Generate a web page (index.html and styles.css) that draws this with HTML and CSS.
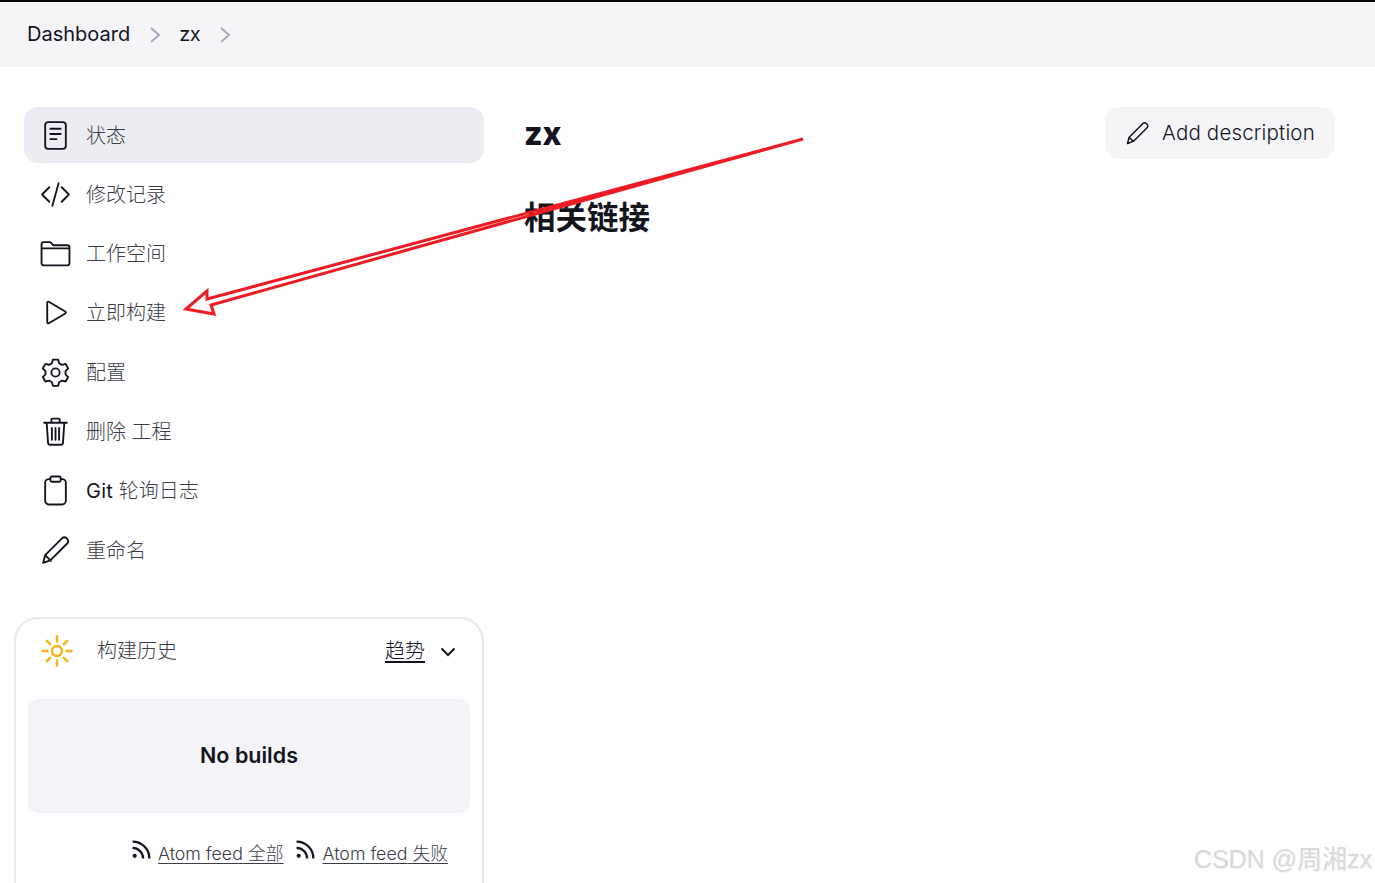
FILE: index.html
```html
<!DOCTYPE html>
<html lang="zh-CN">
<head>
<meta charset="utf-8">
<title>zx</title>
<link rel="stylesheet" href="styles.css">
</head>
<body>
<nav class="crumbs">
  <a class="crumb">Dashboard</a>
  <svg class="chev" viewBox="0 0 12 18"><path d="M2 2l8 7-8 7"/></svg>
  <a class="crumb">zx</a>
  <svg class="chev" viewBox="0 0 12 18"><path d="M2 2l8 7-8 7"/></svg>
</nav>
<div class="page">
  <aside class="side">
    <ul class="menu">
      <li class="item active">
        <svg class="ic" viewBox="0 0 30 30"><rect x="5" y="2" width="20" height="26" rx="3"/><path d="M10 8.500h10M10 13.500h10M10 18.500h6"/></svg>
        <span>状态</span>
      </li>
      <li class="item">
        <svg class="ic" viewBox="0 0 30 30"><path d="M9 8l-7 7 7 7M21 8l7 7-7 7M18 4l-6 22"/></svg>
        <span>修改记录</span>
      </li>
      <li class="item">
        <svg class="ic" viewBox="0 0 30 30"><path d="M1.500 9V6a2 2 0 0 1 2-2h6.500l3 3h13.500a2 2 0 0 1 2 2v15.500a2 2 0 0 1-2 2h-23a2 2 0 0 1-2-2zM1.500 10h27"/></svg>
        <span>工作空间</span>
      </li>
      <li class="item">
        <svg class="ic" viewBox="0 0 30 30"><path d="M7 5.500a1 1 0 0 1 1.500-.9l16 9.500a1 1 0 0 1 0 1.800l-16 9.500a1 1 0 0 1-1.500-.9z"/></svg>
        <span>立即构建</span>
      </li>
      <li class="item">
        <svg class="ic" viewBox="0 0 30 30"><circle cx="15" cy="15" r="4"/><path d="M12.500 2.500h5l1 3.500 2.800 1.600 3.500-.9 2.500 4.300-2.600 2.600v3.200l2.600 2.600-2.500 4.300-3.500-.9-2.800 1.600-1 3.500h-5l-1-3.500-2.800-1.600-3.500.9-2.500-4.300 2.600-2.600v-3.200l-2.600-2.600 2.500-4.300 3.500.9 2.800-1.600z" stroke-linejoin="round"/></svg>
        <span>配置</span>
      </li>
      <li class="item">
        <svg class="ic" viewBox="0 0 30 30"><path d="M4 6.500h22M6.500 7l1.300 19a2 2 0 0 0 2 1.800h10.400a2 2 0 0 0 2-1.800l1.300-19M11 6V3.500a1 1 0 0 1 1-1h6a1 1 0 0 1 1 1V6M11.500 11.500v11.500M15 11.500v11.500M18.500 11.500v11.500"/></svg>
        <span>删除 工程</span>
      </li>
      <li class="item">
        <svg class="ic" viewBox="0 0 30 30"><rect x="5" y="4" width="20" height="24.500" rx="3.500"/><rect x="10" y="1.500" width="10" height="5" rx="1.500" class="fillw"/></svg>
        <span><b class="lat">Git</b> 轮询日志</span>
      </li>
      <li class="item">
        <svg class="ic" viewBox="0 0 30 30"><path d="M3 27l2-7.500L21.500 3a2.800 2.800 0 0 1 4 0l1 1a2.800 2.800 0 0 1 0 4L10 24.500zM5 19.500l5.500 5.500"/></svg>
        <span>重命名</span>
      </li>
    </ul>
    <section class="history">
      <header class="hist-head">
        <svg class="sun" viewBox="0 0 32 32"><circle cx="16" cy="16" r="5"/><path d="M16 1.500v5M16 25.500v5M1.500 16h5M25.500 16h5M5.800 5.800l3.400 3.400M22.800 22.800l3.400 3.400M5.800 26.200l3.400-3.400M22.800 9.200l3.400-3.400"/></svg>
        <span class="hist-title">构建历史</span>
        <a class="trend">趋势</a>
        <svg class="down" viewBox="0 0 16 10"><path d="M1.500 1.500L8 8l6.500-6.500"/></svg>
      </header>
      <div class="empty">No builds</div>
      <footer class="feeds">
        <svg class="rss" viewBox="0 0 20 20"><circle cx="3.500" cy="16" r="2" class="dot"/><path d="M1.500 8.500a10 10 0 0 1 10 10M1.500 2.500a16 16 0 0 1 16 16"/></svg>
        <a class="feed"><b class="lat">Atom feed</b> 全部</a>
        <svg class="rss" viewBox="0 0 20 20"><circle cx="3.500" cy="16" r="2" class="dot"/><path d="M1.500 8.500a10 10 0 0 1 10 10M1.500 2.500a16 16 0 0 1 16 16"/></svg>
        <a class="feed"><b class="lat">Atom feed</b> 失败</a>
      </footer>
    </section>
  </aside>
  <main class="main">
    <div class="title-row">
      <h1 class="title">zx</h1>
      <button class="add">
        <svg class="add-ic" viewBox="0 0 30 30"><path d="M3 27l2-7.500L21.500 3a2.800 2.800 0 0 1 4 0l1 1a2.800 2.800 0 0 1 0 4L10 24.500zM5 19.500l5.500 5.500"/></svg>
        <span class="add-text">Add description</span>
      </button>
    </div>
    <h2 class="links">相关链接</h2>
  </main>
</div>
<svg class="arrow" viewBox="0 0 1375 883"><path d="M186 309L207 291L207 299L803 139L211 305L214 314Z"/></svg>
<div class="mark">CSDN @周湘zx</div>
</body>
</html>
```
FILE: styles.css
```css
* { box-sizing: border-box; }
html, body { margin: 0; height: 883px; overflow: hidden; }
body {
  position: relative;
  background: #fff;
  color: #14141f;
  font-family: Inter, "Noto Sans CJK SC", sans-serif;
  font-size: 20px;
  border-top: 2px solid #000;
}
.crumbs {
  height: 65px;
  background: #f5f5f8;
  display: flex;
  align-items: center;
  padding-left: 27px;
}
.crumb { line-height: 1; margin-top: -2px; }
.chev { width: 12px; height: 18px; fill: none; stroke: #aaaab8; stroke-width: 2; }
.crumb + .chev { margin-left: 19px; margin-right: 18px; }
.crumb:nth-of-type(2) { letter-spacing: -.5px; }
.page { display: flex; }
.side { width: 484px; padding-top: 40px; flex: none; }
.menu { list-style: none; margin: 0 0 0 24px; padding: 0; }
.item {
  height: 56px;
  margin-bottom: 3.300px;
  display: flex;
  align-items: center;
  gap: 15px;
  padding-left: 16px;
  border-radius: 14px;
  color: #3c3c46;
  font-weight: 300;
}
.item span { margin-top: -2px; }
.lat { font-weight: 400; color: #14141f; letter-spacing: .3px; }
.active { background: #ecedf2; }
.ic { width: 31px; height: 31px; flex: none; fill: none; stroke: #14141f; stroke-width: 1.800; stroke-linecap: round; stroke-linejoin: round; }
.fillw { fill: #fff; }
.history {
  margin: 39px 0 0 14px;
  height: 300px;
  border: 2px solid #e9e9ef;
  border-radius: 24px;
  padding: 0 12px;
}
.hist-head { height: 80px; display: flex; align-items: center; padding: 0 14px 20px 13px; }
.sun { width: 32px; height: 32px; fill: none; stroke: #fbb117; stroke-width: 2.500; stroke-linecap: round; margin-top: 4px; flex: none; }
.hist-title { margin-left: 24px; font-weight: 300; color: #3c3c46; }
.trend { margin-left: auto; text-decoration: underline; text-underline-offset: 3px; font-weight: 300; }
.down { width: 16px; height: 10px; margin-left: 15px; margin-top: 6px; fill: none; stroke: #14141f; stroke-width: 2; }
.empty {
  height: 114px;
  background: #f3f3f8;
  border-radius: 10px;
  display: flex;
  align-items: center;
  justify-content: center;
  font-weight: 600;
  font-size: 21.500px;
  padding-bottom: 2px;
}
.feeds {
  margin-top: 26px;
  display: flex;
  align-items: center;
  justify-content: flex-end;
  padding-right: 22px;
  font-size: 17.800px;
  font-weight: 300;
  color: #3c3c46;
}
.feeds .lat { font-weight: 300; color: #3c3c46; letter-spacing: 0; }
.feed { text-decoration: underline; text-underline-offset: 3px; margin-left: 6px; }
.feed + .rss { margin-left: 12px; }
.rss { width: 21px; height: 21px; margin-top: -5px; fill: none; stroke: #14141f; stroke-width: 2.200; }
.rss .dot { fill: #14141f; stroke: none; }
.main { flex: 1; padding: 40px 40px 0 40px; }
.title-row { display: flex; justify-content: space-between; align-items: flex-start; }
.title { margin: 0; padding-top: 8px; font-size: 32px; line-height: 38px; font-weight: 800; }
.add {
  display: flex;
  align-items: center;
  gap: 12px;
  height: 52px;
  width: 230px;
  padding: 0 0 0 20px;
  background: #f5f5f8;
  border: 0;
  border-radius: 14px;
  font: inherit;
  font-size: 20.500px;
  color: #14141f;
}
.add-text { margin-top: -2px; font-weight: 300; letter-spacing: .18px; }
.add-ic { width: 25px; height: 25px; fill: none; stroke: #14141f; stroke-width: 1.800; stroke-linejoin: round; }
.links { margin: 39px 0 0; font-size: 31.500px; line-height: 40px; font-weight: 700; }
.arrow { position: absolute; left: 0; top: -2px; width: 1375px; height: 883px; fill: none; stroke: #ed1c24; stroke-width: 3; stroke-linejoin: miter; pointer-events: none; }
.mark {
  position: absolute;
  right: 3px;
  top: 840px;
  font-family: "Liberation Sans", "Noto Sans CJK SC", sans-serif;
  font-size: 25px;
  line-height: 34px;
  color: #d9d9d9;
  text-shadow: 1px 1px 1px rgba(0,0,0,.06);
}
```
